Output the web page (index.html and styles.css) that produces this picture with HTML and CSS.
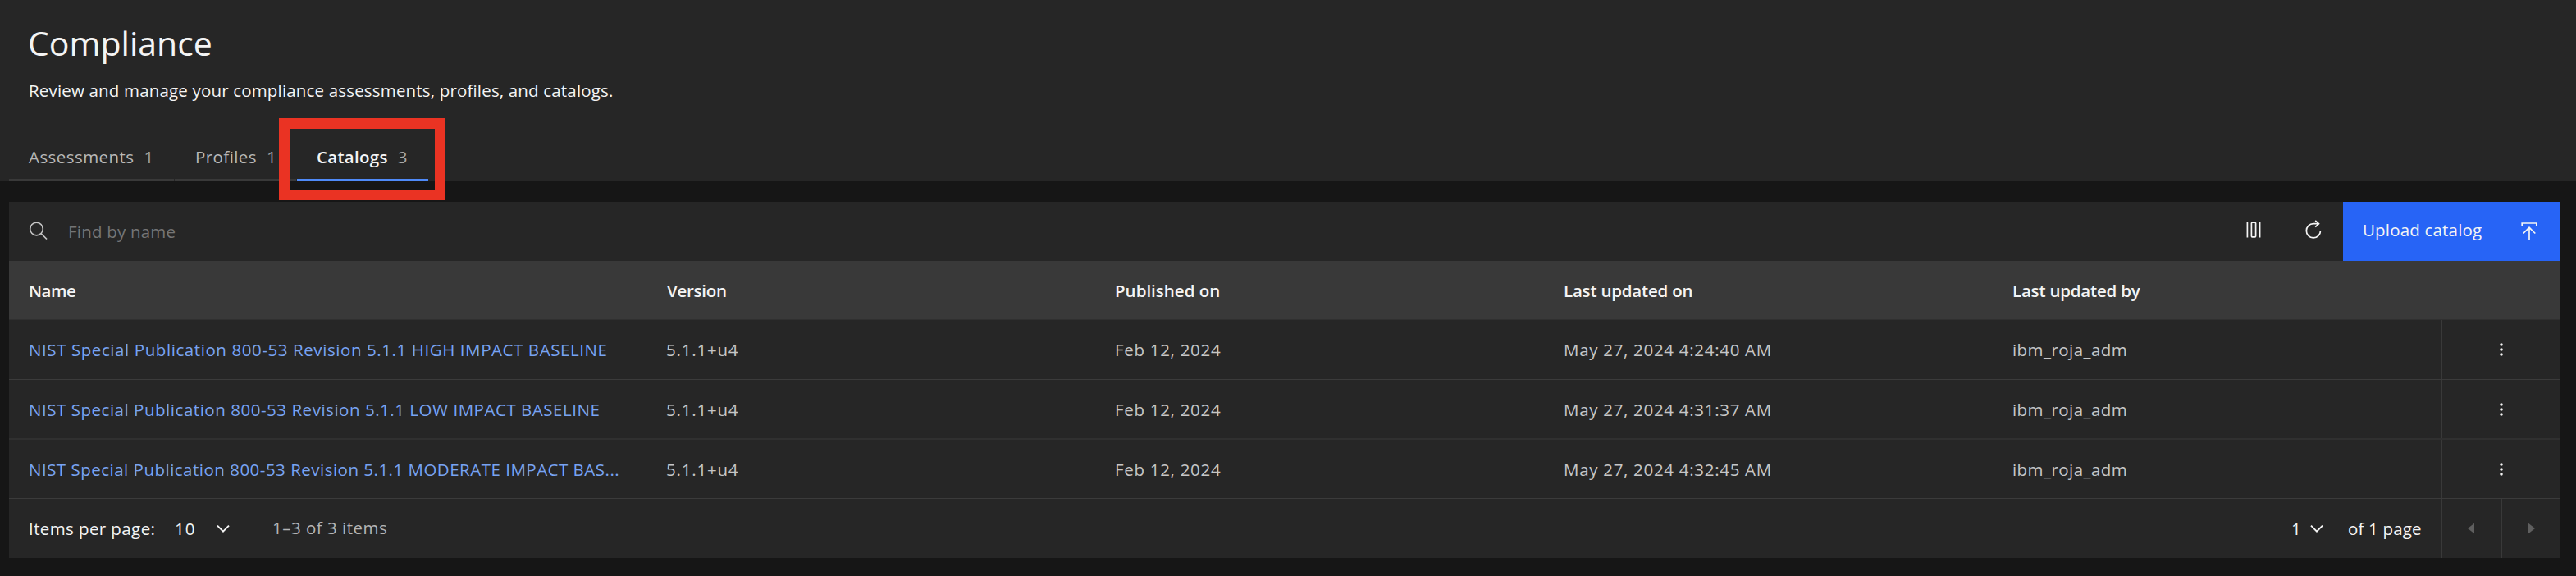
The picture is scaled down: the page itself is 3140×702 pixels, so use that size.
FILE: index.html
```html
<!DOCTYPE html>
<html lang="en">
<head>
<meta charset="utf-8">
<title>Compliance</title>
<link rel="stylesheet" href="styles.css">
</head>
<body>
<header class="page-header">
  <h1 class="title">Compliance</h1>
  <p class="subtitle">Review and manage your compliance assessments, profiles, and catalogs.</p>
  <nav class="tabs">
    <a class="tab tab-assessments"><span class="tab-name">Assessments</span><span class="count">1</span></a>
    <a class="tab tab-profiles"><span class="tab-name">Profiles</span><span class="count">1</span></a>
    <a class="tab tab-catalogs active"><span class="tab-name">Catalogs</span><span class="count">3</span></a>
  </nav>
  <div class="highlight"></div>
</header>

<main class="panel">
  <div class="toolbar">
    <svg class="icon search-icon" width="24" height="24" viewBox="0 0 24 24"><circle cx="10.5" cy="9" r="7.8"/><path d="M16 14.5l7 7"/></svg>
    <span class="placeholder">Find by name</span>
    <div class="tools">
      <button class="tool"><svg class="icon" width="24" height="24" viewBox="0 0 24 24"><path d="M3.4 2.5v19M18.6 2.5v19"/><rect x="8.4" y="3.2" width="5.2" height="17.6" rx="1"/></svg></button>
      <button class="tool"><svg class="icon" width="24" height="24" viewBox="0 0 24 24"><path d="M20.5 13.3a8.6 8.6 0 1 1-8.6-8.6h6.6M14.2.8l4.3 3.9-4.3 4"/></svg></button>
      <button class="upload"><span>Upload catalog</span><svg class="icon upload-icon" width="24" height="24" viewBox="0 0 24 24"><path d="M3.2 6.8V3h17.6v3.8M12 23.5V8.5M4.7 15.5L12 8.3l7.3 7.2"/></svg></button>
    </div>
  </div>

  <div class="row head">
    <div class="cell h-name">Name</div>
    <div class="cell h-version">Version</div>
    <div class="cell">Published on</div>
    <div class="cell h-updated">Last updated on</div>
    <div class="cell h-updated">Last updated by</div>
    <div></div>
  </div>
  <div class="row">
    <div class="cell link link-high">NIST Special Publication 800-53 Revision 5.1.1 HIGH IMPACT BASELINE</div>
    <div class="cell version">5.1.1+u4</div>
    <div class="cell date">Feb 12, 2024</div>
    <div class="cell date">May 27, 2024 4:24:40 AM</div>
    <div class="cell user">ibm_roja_adm</div>
    <div class="actions"><svg class="dots" width="24" height="24" viewBox="0 0 24 24"><circle cx="12" cy="6" r="1.8"/><circle cx="12" cy="12" r="1.8"/><circle cx="12" cy="18" r="1.8"/></svg></div>
  </div>
  <div class="row row-soft">
    <div class="cell link link-low">NIST Special Publication 800-53 Revision 5.1.1 LOW IMPACT BASELINE</div>
    <div class="cell version">5.1.1+u4</div>
    <div class="cell date">Feb 12, 2024</div>
    <div class="cell date">May 27, 2024 4:31:37 AM</div>
    <div class="cell user">ibm_roja_adm</div>
    <div class="actions"><svg class="dots" width="24" height="24" viewBox="0 0 24 24"><circle cx="12" cy="6" r="1.8"/><circle cx="12" cy="12" r="1.8"/><circle cx="12" cy="18" r="1.8"/></svg></div>
  </div>
  <div class="row row-last">
    <div class="cell link link-moderate">NIST Special Publication 800-53 Revision 5.1.1 MODERATE IMPACT BAS...</div>
    <div class="cell version">5.1.1+u4</div>
    <div class="cell date">Feb 12, 2024</div>
    <div class="cell date">May 27, 2024 4:32:45 AM</div>
    <div class="cell user">ibm_roja_adm</div>
    <div class="actions"><svg class="dots" width="24" height="24" viewBox="0 0 24 24"><circle cx="12" cy="6" r="1.8"/><circle cx="12" cy="12" r="1.8"/><circle cx="12" cy="18" r="1.8"/></svg></div>
  </div>

  <footer class="pagination">
    <div class="page-size">
      <span class="size-label">Items per page:</span>
      <span class="size-value">10</span>
      <svg class="icon chevron" width="24" height="24" viewBox="0 0 24 24"><path d="M5 8.6l7 7 7-7"/></svg>
    </div>
    <span class="range">1–3 of 3 items</span>
    <div class="page-nav">
      <div class="page-select">
        <span class="page-value">1</span>
        <svg class="icon chevron" width="24" height="24" viewBox="0 0 24 24"><path d="M5 8.6l7 7 7-7"/></svg>
        <span class="page-total">of 1 page</span>
      </div>
      <div class="arrow arrow-prev"><svg width="24" height="24" viewBox="0 0 24 24"><path d="M16 5.8v12.4L8 12z"/></svg></div>
      <div class="arrow arrow-next"><svg width="24" height="24" viewBox="0 0 24 24"><path d="M8 5.8v12.4l8-6.2z"/></svg></div>
    </div>
  </footer>
</main>
</body>
</html>
```
FILE: styles.css
```css
* { box-sizing: border-box; }
body {
  margin: 0;
  width: 3140px;
  height: 702px;
  overflow: hidden;
  background: #161616;
  color: #f4f4f4;
  font: 20.5px/32px "Open Sans", "Noto Sans", sans-serif;
  white-space: nowrap;
}
button { border: 0; margin: 0; padding: 0; background: none; color: inherit; font: inherit; }
svg { display: block; flex: none; }
.icon { fill: none; stroke: #f4f4f4; stroke-width: 1.7; }

.page-header {
  position: relative;
  height: 221px;
  padding: 22px 0 0 11px;
  background: #262626;
}
.title { margin: 0 0 12px 23px; font-size: 41px; font-weight: 400; line-height: 60px; }
.subtitle { margin: 0 0 23px 24px; letter-spacing: 0.17px; }
.tabs { display: flex; gap: 1px; height: 72px; }
.tab {
  display: flex;
  gap: 12px;
  padding: 26px 0 0 24px;
  border-bottom: 3px solid #393939;
  color: #b8b8b8;
  letter-spacing: 0.43px;
}
.tab-assessments { width: 201px; }
.tab-profiles { width: 148px; padding-left: 25px; }
.tab-catalogs { width: 160px; }
.count { color: #a0a0a0; }
.tab.active { border-color: #4f8af8; color: #f4f4f4; font-weight: 600; letter-spacing: 0.29px; }
.active .count { color: #a8a8a8; font-weight: 500; }
.highlight {
  position: absolute;
  left: 340px;
  top: 144px;
  width: 203px;
  height: 100px;
  border: 13px solid #ea3323;
}

.panel { width: 3109px; margin: 25px 0 0 11px; background: #262626; }
.toolbar { display: flex; align-items: center; height: 72px; padding-left: 23px; }
.search-icon { stroke: #c6c6c6; }
.placeholder { margin-left: 25px; color: #757575; letter-spacing: 0.2px; }
.tools { display: flex; height: 72px; margin-left: auto; }
.tool { display: flex; width: 72px; justify-content: center; padding-top: 22px; }
.upload {
  display: flex;
  align-items: center;
  justify-content: space-between;
  width: 264px;
  padding: 0 25px 4px 24px;
  background: #2764f6;
  letter-spacing: 0.18px;
}
.upload-icon { margin-top: 2px; }

.row {
  display: grid;
  grid-template-columns: 777px repeat(4, 547px) 144px;
  align-items: center;
  height: 73px;
  line-height: 72px;
  border-bottom: 1px solid #3b3b3b;
  color: #c6c6c6;
}
.row-soft { border-bottom: 2px solid #303030; line-height: 70px; }
.row-last { height: 72px; line-height: 70px; }
.head { height: 72px; background: #393939; border-color: #303030; color: #f4f4f4; font-weight: 600; line-height: 70px; }
.cell { padding-left: 24px; }
.h-name { letter-spacing: -0.5px; }
.h-version { padding-left: 25px; letter-spacing: -0.27px; }
.h-updated { letter-spacing: -0.21px; }
.link { color: #78a3f2; }
.link-high { letter-spacing: 0.58px; }
.link-low { letter-spacing: 0.53px; }
.link-moderate { letter-spacing: 0.49px; }
.version { letter-spacing: 0.8px; }
.date { letter-spacing: 0.7px; }
.user { letter-spacing: 0.44px; }
.actions {
  display: flex;
  align-items: center;
  justify-content: center;
  align-self: stretch;
  border-left: 1px solid #393939;
}
.dots { fill: #f4f4f4; }

.pagination { display: flex; height: 72px; line-height: 71px; }
.page-size { display: flex; align-items: center; width: 298px; padding-left: 24px; border-right: 1px solid #393939; }
.size-label { width: 178px; letter-spacing: 0.4px; }
.size-value { width: 47px; letter-spacing: 1px; }
.chevron { stroke-width: 2; }
.range { margin-left: 23px; color: #b4b4b4; letter-spacing: 0.49px; }
.page-nav { display: flex; margin-left: auto; }
.page-select { display: flex; align-items: center; width: 207px; padding-left: 23px; border-left: 1px solid #393939; }
.page-value { width: 19px; }
.page-total { margin-left: 26px; letter-spacing: 0.17px; }
.arrow {
  display: flex;
  align-items: center;
  justify-content: center;
  width: 73px;
  border-left: 1px solid #393939;
  fill: #5f5f5f;
}
.arrow-prev { padding-right: 2px; }
.arrow-next { width: 71px; padding-left: 2px; }
```
